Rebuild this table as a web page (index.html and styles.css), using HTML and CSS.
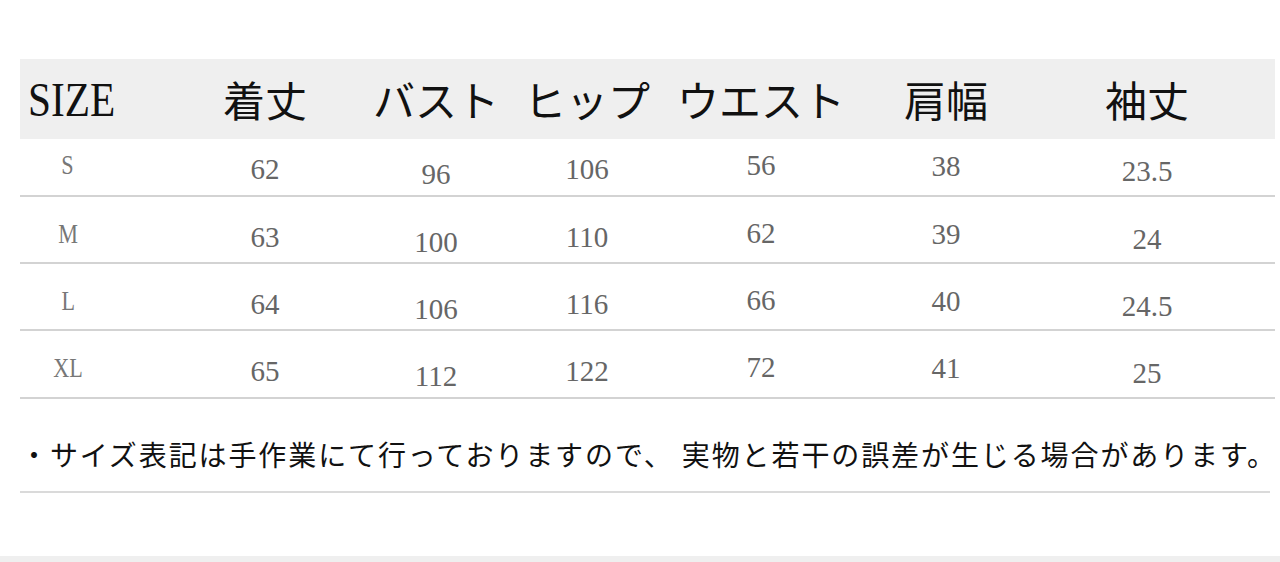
FILE: index.html
```html
<!DOCTYPE html>
<html lang="ja">
<head>
  <meta charset="UTF-8">
  <meta name="viewport" content="width=device-width, initial-scale=1.0">
  <title>サイズ表</title>
  <link rel="stylesheet" href="styles.css">
</head>
<body>
  <div class="chart">
    <div class="head">
      <div class="c1"><span class="size-word">SIZE</span></div>
      <div class="c2">着丈</div>
      <div class="c3">バスト</div>
      <div class="c4">ヒップ</div>
      <div class="c5">ウエスト</div>
      <div class="c6">肩幅</div>
      <div class="c7">袖丈</div>
    </div>

    <div class="row first">
      <div class="c1"><span class="label">S</span></div>
      <div class="c2">62</div>
      <div class="c3">96</div>
      <div class="c4">106</div>
      <div class="c5">56</div>
      <div class="c6">38</div>
      <div class="c7">23.5</div>
    </div>
    <div class="row">
      <div class="c1"><span class="label">M</span></div>
      <div class="c2">63</div>
      <div class="c3">100</div>
      <div class="c4">110</div>
      <div class="c5">62</div>
      <div class="c6">39</div>
      <div class="c7">24</div>
    </div>
    <div class="row">
      <div class="c1"><span class="label">L</span></div>
      <div class="c2">64</div>
      <div class="c3">106</div>
      <div class="c4">116</div>
      <div class="c5">66</div>
      <div class="c6">40</div>
      <div class="c7">24.5</div>
    </div>
    <div class="row last">
      <div class="c1"><span class="label">XL</span></div>
      <div class="c2">65</div>
      <div class="c3">112</div>
      <div class="c4">122</div>
      <div class="c5">72</div>
      <div class="c6">41</div>
      <div class="c7">25</div>
    </div>

    <p class="note">・サイズ表記は手作業にて行っておりますので、 実物と若干の誤差が生じる場合があります。</p>
  </div>
  <div class="bottom-rule"></div>
</body>
</html>
```

FILE: styles.css
```css
body {
  margin: 0;
  background: #fff;
  font-family: "Liberation Serif", "Noto Sans CJK JP", serif;
  overflow: hidden;
}
.chart {
  margin: 0 5px 0 20px;
  padding-top: 59px;
}
.head,
.row {
  display: grid;
  grid-template-columns: 148px 182px 162px 162px 180px 192px 229px;
  text-align: center;
  box-sizing: border-box;
}

/* column centring */
.c1 { padding-right: 52px; }
.c2 { padding-left: 12px; }
.c3 { padding-left: 10px; }
.c4 { padding-right: 12px; }
.c5 { padding-right: 6px; }
.c6 { padding-right: 8px; }
.c7 { padding-right: 27px; }

.head {
  height: 80px;
  align-items: center;
  background: #efefef;
  color: #111;
  font-family: "Noto Sans CJK JP", sans-serif;
  font-size: 42px;
  line-height: 42px;
}
.head .c1 { padding-right: 44px; }
.size-word {
  display: inline-block;
  font-family: "Liberation Serif", serif;
  font-size: 48px;
  transform: scaleX(0.86);
}

.row {
  height: 67px;
  padding-top: 10px;
  align-items: start;
  border-bottom: 2px solid #d3d3d3;
  color: #666;
  font-size: 29px;
  line-height: 29px;
}
.row.first {
  height: 58px;
  padding-top: 0;
}
.row.last {
  height: 68px;
}
.label {
  display: inline-block;
  color: #777;
  transform: scaleX(0.82);
}
.row .c1 { padding-top: 14px; font-size: 27px; line-height: 27px; }
.row .c2 { padding-top: 16px; }
.row .c3 { padding-top: 21px; }
.row .c4 { padding-top: 16px; }
.row .c5 { padding-top: 12px; }
.row .c6 { padding-top: 13px; }
.row .c7 { padding-top: 18px; }
.row.first .c1 { padding-top: 13px; }

.note {
  margin: 0 5px 0 0;
  height: 94px;
  box-sizing: border-box;
  padding-top: 41px;
  border-bottom: 2px solid #dadada;
  font-family: "Noto Sans CJK JP", sans-serif;
  font-size: 28px;
  line-height: 28px;
  letter-spacing: 1.9px;
  color: #111;
  white-space: nowrap;
}
.bottom-rule {
  margin-top: 63px;
  height: 6px;
  background: #efefef;
}
```
